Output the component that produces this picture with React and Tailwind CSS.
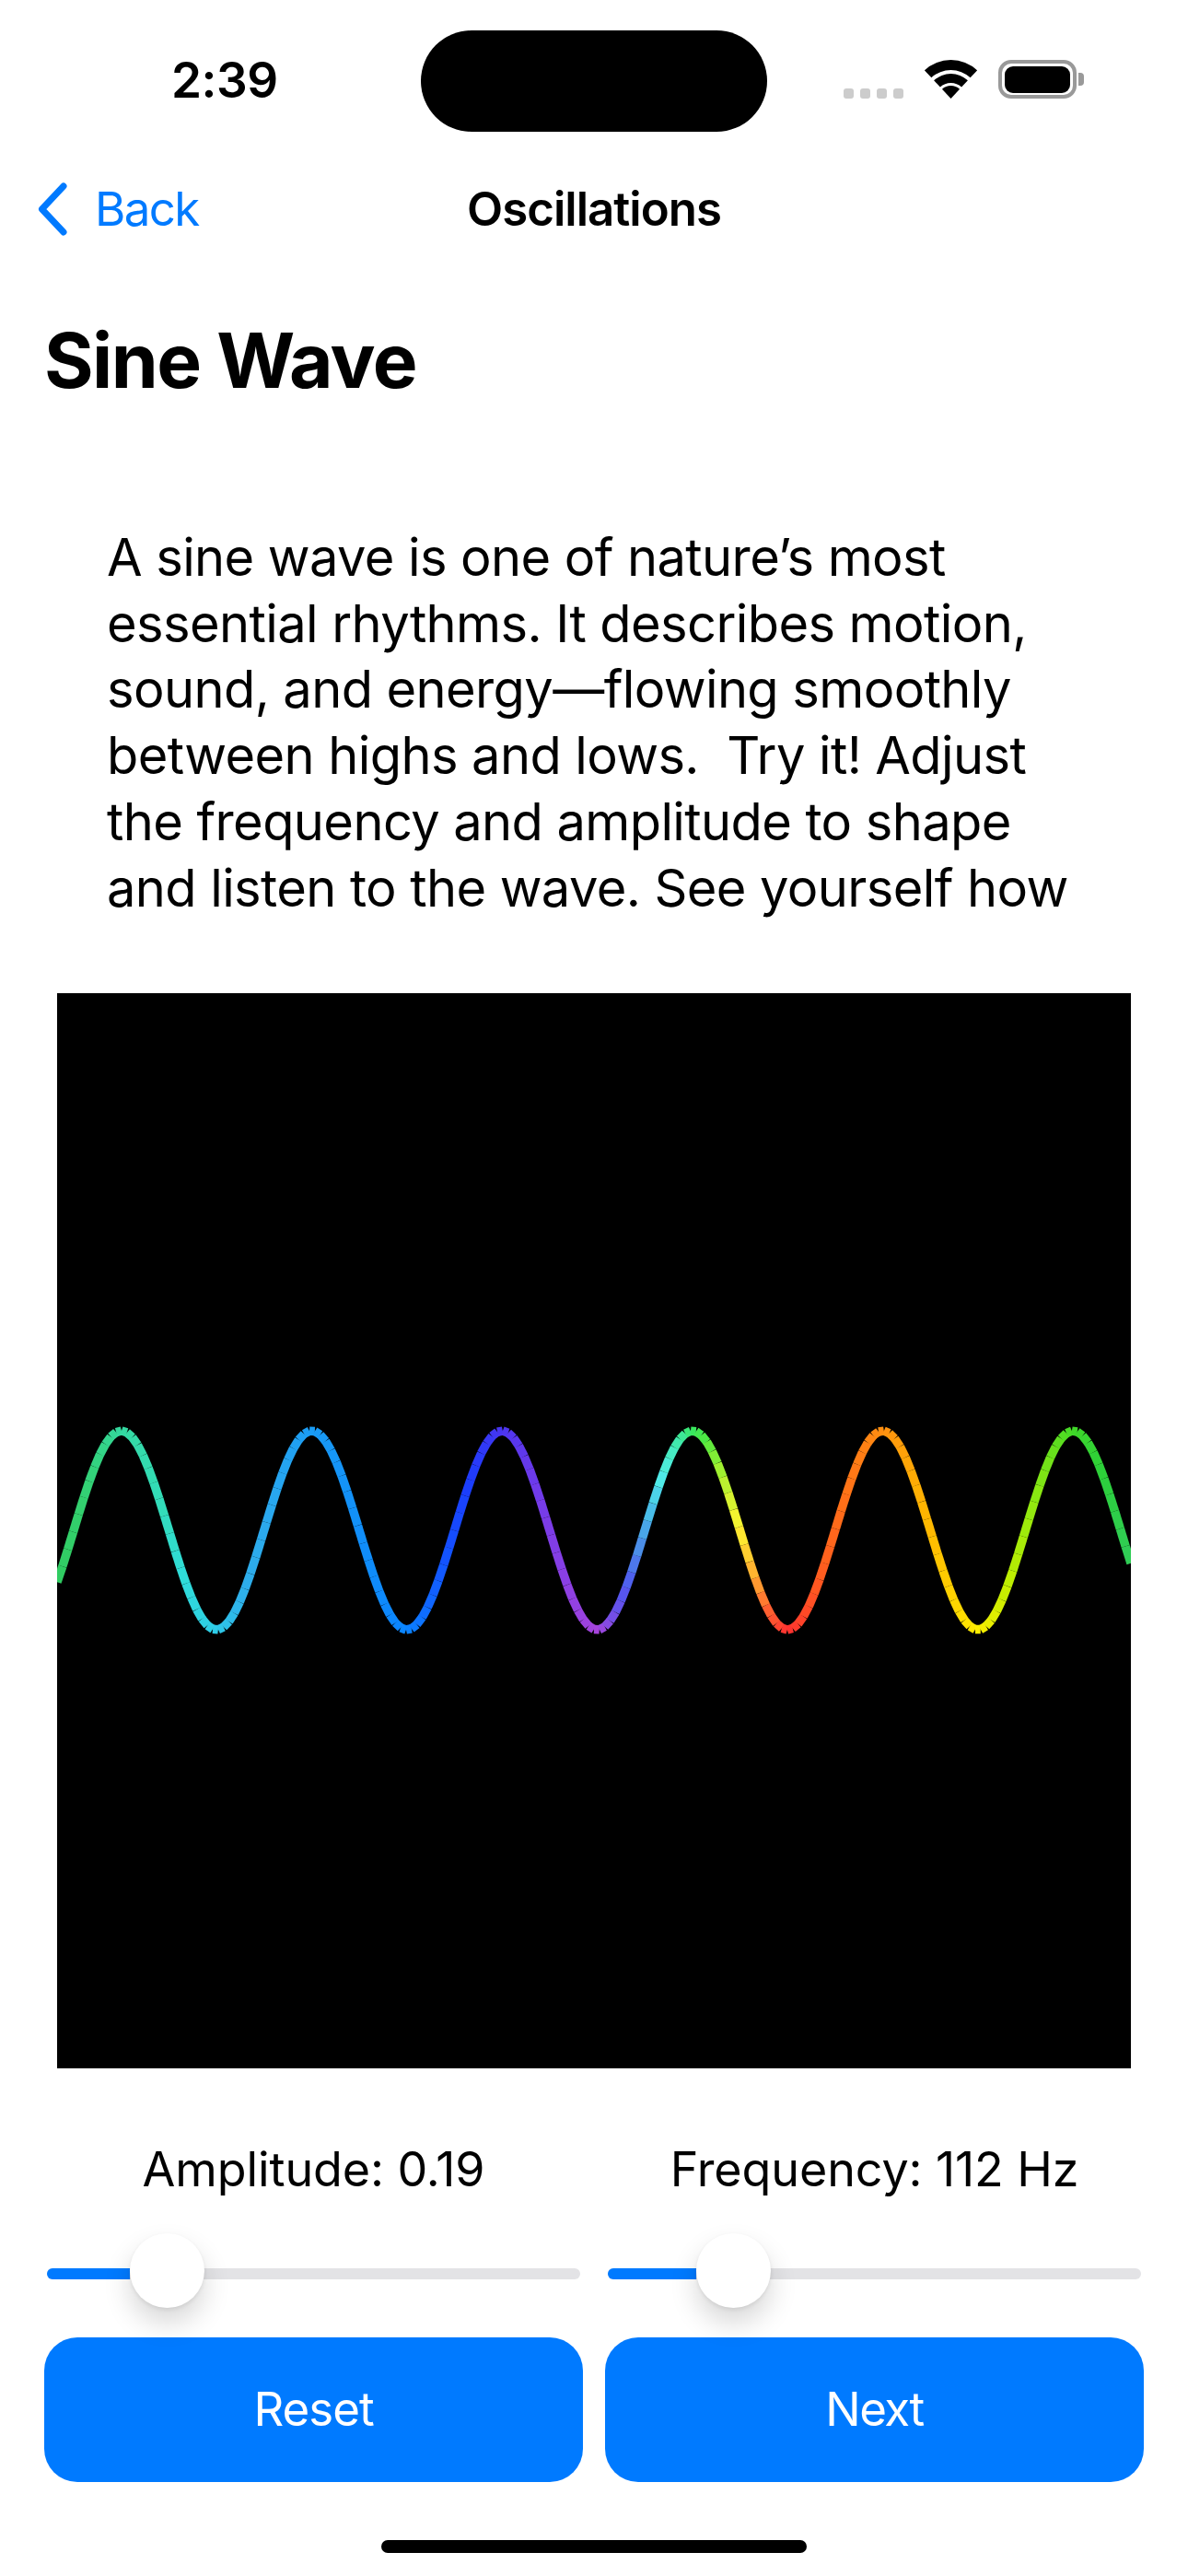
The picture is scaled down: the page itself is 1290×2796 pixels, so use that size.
import React from 'react';

// colour stops along the wave, keyed by x inside the 1166px plot
const STOPS = [
  [0, '#30cc60'], [29, '#33d070'], [70, '#34d9a0'], [112, '#33dcb8'], [136, '#2fdcd8'],
  [172, '#2ecce8'], [203, '#2eaeea'], [231, '#2aa8ee'], [276, '#1a9cf5'], [322, '#1290f8'],
  [379, '#0a84ff'], [425, '#1450ff'], [448, '#1c3cfc'], [483, '#4a35f0'], [531, '#7a3ce8'],
  [587, '#a744dc'], [606, '#6c50e8'], [618, '#5056f0'], [629, '#4c80e8'], [643, '#48b8e8'],
  [657, '#50eee8'], [677, '#3ee8a0'], [690, '#38e860'], [705, '#50e840'], [720, '#a0f030'],
  [740, '#fff530'], [756, '#ffb030'], [772, '#ff6030'], [793, '#ff3030'], [827, '#ff5a20'],
  [855, '#ff7018'], [897, '#ff9010'], [946, '#ffb800'], [1000, '#ffee00'], [1033, '#c0ee00'],
  [1060, '#90e810'], [1103, '#40d828'], [1135, '#2cd03a'], [1166, '#30cc58'],
];

const hexToRgb = (h) => [1, 3, 5].map((i) => parseInt(h.slice(i, i + 2), 16));

const colorAt = (x) => {
  let i = 0;
  while (i < STOPS.length - 2 && STOPS[i + 1][0] < x) i++;
  const [x0, c0] = STOPS[i];
  const [x1, c1] = STOPS[i + 1];
  const t = Math.min(1, Math.max(0, (x - x0) / (x1 - x0)));
  const a = hexToRgb(c0);
  const b = hexToRgb(c1);
  return `rgb(${a.map((v, k) => Math.round(v + (b[k] - v) * t)).join(',')})`;
};

const waveY = (x) => 583 - 108 * Math.cos((2 * Math.PI * (x - 69.7)) / 206.7);

function Wave() {
  const step = 5.83;
  const segs = [];
  for (let i = 0; i < 200; i++) {
    const x = i * step;
    segs.push(
      <line
        key={i}
        x1={x}
        y1={waveY(x)}
        x2={x + step}
        y2={waveY(x + step)}
        stroke={colorAt(x + step / 2)}
        strokeWidth="9.5"
      />
    );
  }
  return (
    <svg viewBox="0 0 1166 1167" className="block w-full h-full">
      {segs}
    </svg>
  );
}

const sector = (r1, r2) => {
  const cx = 28.5;
  const cy = 42;
  const a = (43 * Math.PI) / 180;
  const sx = Math.sin(a);
  const sy = Math.cos(a);
  return `M${cx - r2 * sx} ${cy - r2 * sy}A${r2} ${r2} 0 0 1 ${cx + r2 * sx} ${cy - r2 * sy}L${cx + r1 * sx} ${cy - r1 * sy}A${r1} ${r1} 0 0 0 ${cx - r1 * sx} ${cy - r1 * sy}Z`;
};

function Wifi() {
  return (
    <svg width="57" height="42" viewBox="0 0 57 42" className="block">
      <path d={sector(31, 42)} fill="#000" />
      <path d={sector(17, 27)} fill="#000" />
      <path d={sector(0, 14)} fill="#000" />
    </svg>
  );
}

function StatusIcons() {
  return (
    <div className="ml-[83px] mt-[32px] flex h-[42px] items-end">
      <div className="flex gap-[7px]">
        <span className="h-[11px] w-[11px] rounded-[3px] bg-[#cccccc]" />
        <span className="h-[11px] w-[11px] rounded-[3px] bg-[#cccccc]" />
        <span className="h-[11px] w-[11px] rounded-[3px] bg-[#cccccc]" />
        <span className="h-[11px] w-[11px] rounded-[3px] bg-[#cccccc]" />
      </div>
      <div className="ml-[23px]">
        <Wifi />
      </div>
      <div className="ml-[23px] flex items-center">
        <div className="flex h-[42px] w-[85px] items-center justify-center rounded-[14px] border-[4px] border-[#999999]">
          <div className="h-[29px] w-[71px] rounded-[9px] bg-black" />
        </div>
        <div className="ml-[2px] h-[14px] w-[6px] rounded-r-[4px] bg-[#999999]" />
      </div>
    </div>
  );
}

function Slider({ label, fill }) {
  return (
    <div className="flex w-[579px] flex-col">
      <div className="h-[72px] text-center text-[52px] leading-[72px] tracking-[-0.1px] text-black">{label}</div>
      <div className="relative mt-[71px] h-[12px] rounded-full bg-[#e3e3e6]">
        <div className="h-[12px] rounded-l-full bg-[#007aff]" style={{ width: fill }} />
        <div
          className="absolute top-[-38px] h-[81px] w-[81px] rounded-full bg-white shadow-[0_16px_30px_rgba(0,0,0,0.16),0_2px_4px_rgba(0,0,0,0.08)]"
          style={{ left: fill }}
        />
      </div>
    </div>
  );
}

export default function App() {
  return (
    <div className="flex h-[2796px] w-[1290px] flex-col overflow-hidden bg-white text-black [font-family:Inter,sans-serif]">
      <div className="flex h-[144px] pt-[33px]">
        <div className="w-[457px] pl-[186px] pt-[22px] text-[53px] font-semibold leading-[64px] tracking-[-0.5px]">2:39</div>
        <div className="h-[110px] w-[376px] rounded-full bg-black" />
        <StatusIcons />
      </div>

      <div className="mt-[52px] grid h-[62px] grid-cols-3 items-center">
        <div className="flex items-center pl-[41px] text-[#007aff]">
          <svg width="32" height="58" viewBox="0 0 32 58" fill="none" className="block">
            <path d="M28 4 L4.500 29 L28 54" stroke="#007aff" strokeWidth="7" strokeLinecap="round" strokeLinejoin="round" />
          </svg>
          <span className="ml-[30px] text-[51px] leading-[62px] tracking-[-1.6px]">Back</span>
        </div>
        <div className="text-center text-[51px] font-semibold leading-[62px] tracking-[-1px]">Oscillations</div>
      </div>

      <h1 className="mt-[84px] pl-[48px] text-[82px] font-bold leading-[100px] tracking-[-1.6px]">Sine Wave</h1>

      <p className="mt-[128px] pl-[116px] text-[56px] leading-[71.7px] tracking-[-0.6px]">
        A sine wave is one of nature’s most
        <br />
        essential rhythms. It describes motion,
        <br />
        sound, and energy—flowing smoothly
        <br />
        between highs and lows.&nbsp; Try it! Adjust
        <br />
        the frequency and amplitude to shape
        <br />
        and listen to the wave. See yourself how
      </p>

      <div className="ml-[62px] mt-[78px] h-[1167px] w-[1166px] bg-black">
        <Wave />
      </div>

      <div className="mt-[74px] flex justify-between pl-[51px] pr-[51px]">
        <Slider label="Amplitude: 0.19" fill={90} />
        <Slider label="Frequency: 112 Hz" fill={96} />
      </div>

      <div className="mt-[63px] flex justify-between px-[48px]">
        <button className="h-[157px] w-[585px] rounded-[36px] bg-[#007aff] text-[51px] tracking-[-1px] text-white">Reset</button>
        <button className="h-[157px] w-[585px] rounded-[36px] bg-[#007aff] text-[51px] tracking-[-1.5px] text-white">Next</button>
      </div>

      <div className="mx-auto mt-[63px] h-[14px] w-[462px] rounded-full bg-black" />
    </div>
  );
}
